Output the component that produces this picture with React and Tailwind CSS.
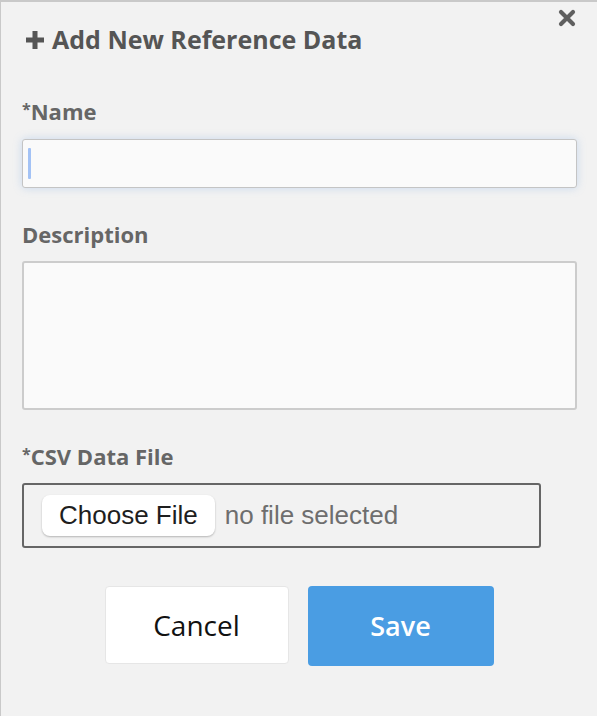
export default function App() {
    return (
        <div className="w-[597px] h-[720px] bg-white" style={{ fontFamily: '"Open Sans", Lato, sans-serif' }}>
            <div className="relative h-[716px] bg-[#f2f2f2] border-t-2 border-l border-[#c9c9c9] px-[21px] pt-[23px] flex flex-col">
                {/* Close */}
                <button className="absolute right-[20px] top-[6px] w-[20px] h-[20px] flex items-center justify-center">
                    <svg width="18" height="18" viewBox="0 0 18 18">
                        <path d="M3 3 L15 15 M15 3 L3 15" stroke="#5f5f5f" strokeWidth="4.2" strokeLinecap="round" />
                    </svg>
                </button>

                {/* Header */}
                <h1 className="flex items-center h-[30px] text-[25px] font-bold text-[#555555]">
                    <svg width="22" height="22" viewBox="0 0 22 22" className="mr-[6px] ml-[2px]">
                        <path d="M11 2 V20 M2 11 H20" stroke="#555555" strokeWidth="5" />
                    </svg>
                    Add New Reference Data
                </h1>

                <div className="flex flex-col mt-[44px]">
                    {/* Name */}
                    <label className="h-[24px] leading-[24px] text-[22px] font-bold text-[#666666]">
                        <span className="text-[16px] align-top relative top-[-2px]">*</span>Name
                    </label>
                    <div className="relative mt-[16px] h-[49px] w-[555px] bg-[#fafafa] border border-[#c4c4c4] rounded-[3px] shadow-[0_0_8px_rgba(120,170,230,0.35)]">
                        <span className="absolute left-[5px] top-[8px] w-[3px] h-[31px] rounded-[1px] bg-[#a3c2f5]" />
                    </div>

                    {/* Description */}
                    <label className="mt-[34px] h-[24px] leading-[24px] text-[22px] font-bold text-[#666666]">
                        Description
                    </label>
                    <div className="mt-[15px] h-[149px] w-[555px] bg-[#fafafa] border-2 border-[#cccccc] rounded-[3px]" />

                    {/* CSV */}
                    <label className="mt-[34px] h-[24px] leading-[24px] text-[22px] font-bold text-[#666666]">
                        <span className="text-[16px] align-top relative top-[-2px]">*</span>CSV Data File
                    </label>
                    <div
                        className="mt-[15px] h-[65px] w-[519px] border-2 border-[#666666] rounded-[3px] flex items-center gap-[10px] pl-[18px]"
                        style={{ fontFamily: '"Liberation Sans", Arial, sans-serif' }}
                    >
                        <div className="h-[41px] px-[17px] flex items-center bg-white rounded-[8px] shadow-[0_1px_2px_rgba(0,0,0,0.25)] text-[26px] text-[#1e1e1e]">
                            Choose File
                        </div>
                        <span className="text-[26px] text-[#6e6e6e]">no file selected</span>
                    </div>
                </div>

                {/* Buttons */}
                <div className="mt-[38px] flex justify-center gap-[19px]">
                    <button className="w-[184px] h-[78px] bg-white rounded-[4px] border border-[#e6e6e6] text-[28px] text-[#111111]">
                        Cancel
                    </button>
                    <button className="w-[186px] h-[80px] bg-[#4a9de3] rounded-[4px] text-[27px] text-white font-semibold">
                        Save
                    </button>
                </div>
            </div>
        </div>
    );
}
